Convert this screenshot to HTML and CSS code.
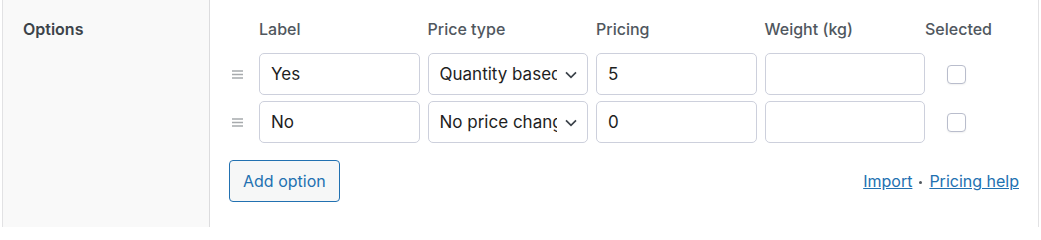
FILE: index.html
```html
<!DOCTYPE html>
<html lang="en">
<head>
<meta charset="utf-8">
<title>Options</title>
<link rel="stylesheet" href="styles.css">
</head>
<body>
<div class="box">
  <div class="side">
    <div class="side-title">Options</div>
  </div>
  <div class="main">
    <div class="grid">
      <div class="hcell"></div>
      <div class="hcell">Label</div>
      <div class="hcell">Price type</div>
      <div class="hcell">Pricing</div>
      <div class="hcell">Weight (kg)</div>
      <div class="hcell center">Selected</div>

      <div class="handle"><svg width="11" height="9" viewBox="0 0 11 9"><path d="M0 1h11M0 4.5h11M0 8h11" stroke="#a7aaad" stroke-width="1.3"/></svg></div>
      <input class="field" type="text" value="Yes">
      <div class="sel-wrap">
        <select class="field sel"><option>Quantity based</option></select>
        <svg class="chev" width="12" height="8" viewBox="0 0 12 8"><path d="M1 1.3l5 5 5-5" fill="none" stroke="#3c434a" stroke-width="1.7"/></svg>
      </div>
      <input class="field" type="text" value="5">
      <input class="field" type="text" value="">
      <div class="center"><span class="check"></span></div>

      <div class="handle"><svg width="11" height="9" viewBox="0 0 11 9"><path d="M0 1h11M0 4.5h11M0 8h11" stroke="#a7aaad" stroke-width="1.3"/></svg></div>
      <input class="field" type="text" value="No">
      <div class="sel-wrap">
        <select class="field sel"><option>No price change</option></select>
        <svg class="chev" width="12" height="8" viewBox="0 0 12 8"><path d="M1 1.3l5 5 5-5" fill="none" stroke="#3c434a" stroke-width="1.7"/></svg>
      </div>
      <input class="field" type="text" value="0">
      <input class="field" type="text" value="">
      <div class="center"><span class="check"></span></div>
    </div>
    <div class="footer">
      <button class="btn" type="button">Add option</button>
      <div class="links"><a href="#">Import</a><span class="dot"></span><a href="#">Pricing help</a></div>
    </div>
  </div>
</div>
</body>
</html>
```
FILE: styles.css
```css
html, body {
  margin: 0;
  padding: 0;
  background: #fff;
}
body {
  font-family: Inter, "Noto Sans", sans-serif;
  font-size: 16px;
  color: #1e1e1e;
}
.box {
  display: flex;
  height: 227px;
  margin-left: 2px;
  width: 1037px;
  border-left: 1px solid #e2e2e4;
  border-right: 1px solid #e2e2e4;
  box-sizing: border-box;
}
.side {
  width: 207px;
  background: #f9f9f9;
  border-right: 1px solid #dcdcde;
  padding: 19px 0 0 20px;
  box-sizing: border-box;
}
.side-title {
  font-weight: 600;
  line-height: 20px;
  color: #3c434a;
}
.main {
  flex: 1;
  padding-top: 19px;
}
.grid {
  display: grid;
  grid-template-columns: 49px repeat(3, 168.5px) 160.5px 63px;
  grid-template-rows: 28px 42px 42px;
  row-gap: 6px;
  align-items: center;
}
.hcell {
  line-height: 20px;
  color: #50575e;
  font-weight: 500;
  align-self: start;
  white-space: nowrap;
}
.center {
  display: flex;
  justify-content: center;
  align-items: center;
}
.hcell.center { display: block; text-align: center; }
.handle {
  padding-left: 22px;
  display: flex;
  align-items: center;
  height: 42px;
}
.field {
  box-sizing: border-box;
  width: 160.5px;
  height: 42px;
  border: 1px solid #cdd0dc;
  border-radius: 5px;
  background: #fff;
  font-family: Inter, "Noto Sans", sans-serif;
  font-size: 17px;
  color: #1e1e1e;
  padding: 0 11px;
  margin: 0;
  outline: none;
}
.sel-wrap {
  position: relative;
  width: 160.5px;
  height: 42px;
}
.sel {
  appearance: none;
  -webkit-appearance: none;
  padding-right: 30px;
}
.chev {
  position: absolute;
  right: 11px;
  top: 18px;
  pointer-events: none;
}
.check {
  display: block;
  width: 19px;
  height: 19px;
  box-sizing: border-box;
  border: 1px solid #b9bdcc;
  border-radius: 4px;
  background: #fff;
  box-shadow: 0 1px 2px rgba(0,0,0,0.06);
}
.footer {
  display: flex;
  justify-content: space-between;
  align-items: center;
  padding: 0 19px;
  margin-top: 17px;
}
.btn {
  height: 42px;
  padding: 0 13px;
  border: 1px solid #2271b1;
  border-radius: 4px;
  background: #f6f7f7;
  color: #2271b1;
  font-family: Inter, "Noto Sans", sans-serif;
  font-size: 16px;
}
.links {
  font-size: 16px;
  color: #50575e;
  display: flex;
  align-items: center;
}
.links a {
  color: #2271b1;
  text-decoration: underline;
}
.dot {
  display: inline-block;
  width: 3px;
  height: 3px;
  border-radius: 50%;
  background: #50575e;
  margin: 2px 7px 0;
}
```
